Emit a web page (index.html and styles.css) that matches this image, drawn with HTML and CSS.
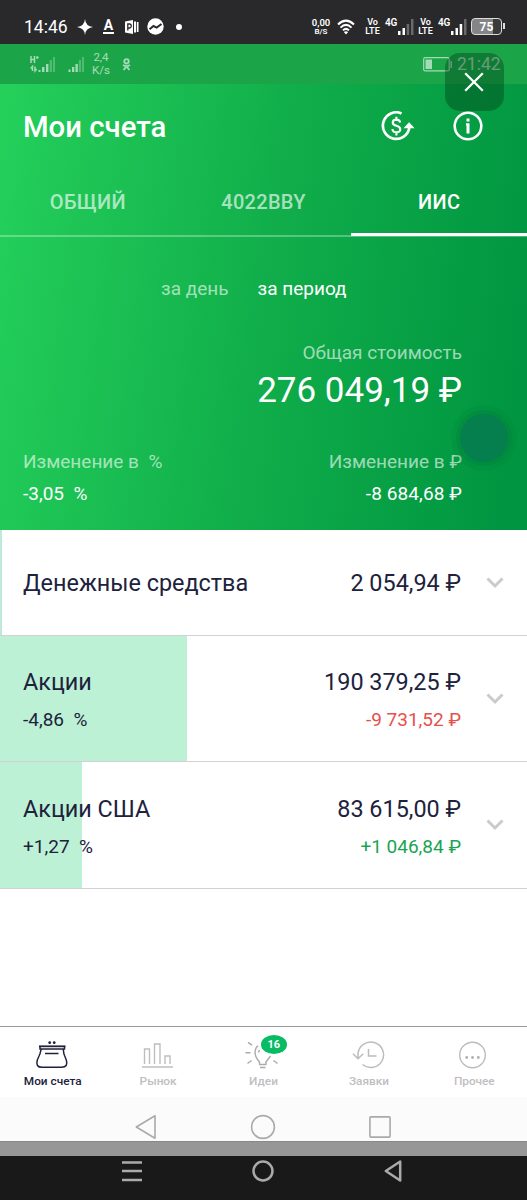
FILE: index.html
```html
<!DOCTYPE html>
<html lang="ru">
<head>
<meta charset="utf-8">
<title>Мои счета</title>
<link rel="stylesheet" href="styles.css">
</head>
<body>
<div class="screen">
  <div class="statusbar">
    <span class="clock">14:46</span>
    <svg class="ic-star" width="16" height="16" viewBox="0 0 16 16"><path fill="#fff" d="M8 0Q8.500 7 16 8Q8.500 9 8 16Q7.500 9 0 8Q7.500 7 8 0Z"/></svg>
    <span class="letter-a">A</span>
    <svg class="ic-doc" width="14" height="14" viewBox="0 0 14 14"><path fill="#fff" d="M0 1.500L8 0V14L0 12.500ZM9 1.500h2v11H9zM11.800 2h1.700v10h-1.700z"/><path fill="none" stroke="#29292b" stroke-width="1.300" d="M2.800 10.500V4h2q1.500.2 1.500 1.900T4.600 8H3"/></svg>
    <svg class="ic-chat" width="17" height="17" viewBox="0 0 17 17"><circle cx="8.500" cy="8.500" r="8.200" fill="#fff"/><path fill="none" stroke="#29292b" stroke-width="2" d="M2.500 11.200L6.500 8l3.200 1.600L14.500 6"/></svg>
    <i class="dot"></i>
    <span class="tiny rate"><b>0,00</b><b class="sm">B/S</b></span>
    <svg class="ic-wifi" width="18" height="16" viewBox="0 0 18 16"><g fill="none" stroke="#fff" stroke-width="2"><path d="M1 5.500Q9-2.200 17 5.500"/><path d="M3.500 8.600Q9 3.200 14.500 8.600"/><path d="M6 11.400Q9 8.400 12 11.400"/></g><path fill="#fff" d="M9 15.500L6.800 13Q9 11.300 11.200 13Z"/></svg>
    <span class="tiny volte"><b>Vo</b><b>LTE</b></span>
    <span class="net">4G</span>
    <svg class="bars" width="17" height="16" viewBox="0 0 17 16"><g fill="#fff"><path d="M1 12h2.500v4H1zM5.500 9H8v7H5.500z"/><path opacity=".3" d="M9.700 5h2.500v11H9.700zM14 0h2.500v16H14z"/></g></svg>
    <span class="tiny volte second"><b>Vo</b><b>LTE</b></span>
    <span class="net">4G</span>
    <svg class="bars" width="17" height="16" viewBox="0 0 17 16"><g fill="#fff"><path d="M1 12h2.500v4H1zM5.500 9H8v7H5.500zM9.700 5h2.500v11H9.700z"/><path opacity=".3" d="M14 0h2.500v16H14z"/></g></svg>
    <span class="battery"><b>75</b></span>
  </div>

  <div class="account">
    <div class="inner-status">
      <svg class="sig-h" width="26" height="17" viewBox="0 0 26 17"><g fill="none" stroke="#fff" stroke-width="1.500"><path d="M1 0v7M4.500 0v7M1 3.500h3.500M6 1.500h2.600M7.300.2v2.600"/><path d="M2.500 15v-4.500L.7 12.500M5 10.500V15l1.700-2"/></g><g fill="#fff"><path d="M8.500 14h2v2h-2zM12 11h2.400v5H12zM16 8h2.400v8H16z"/><path opacity=".4" d="M19.700 4H22v12h-2.300zM23 1h2v15h-2z"/></g></svg>
      <svg class="sig" width="17" height="17" viewBox="0 0 17 17"><g fill="#fff"><path d="M.5 13.500h2V16h-2zM4 11h2.300v5H4zM7.500 8h2.300v8H7.500z"/><path opacity=".4" d="M10.800 4H13v12h-2.200zM14 1h2v15h-2z"/></g></svg>
      <span class="speed">2,4<br>K/s</span>
      <svg class="ok" width="9" height="13" viewBox="0 0 9 13"><g fill="none" stroke="#fff" stroke-width="1.900"><circle cx="4.500" cy="3.300" r="2.200"/><path d="M1 7q3.500 2.200 7 0M1.500 12l3-3.500 3 3.500"/></g></svg>
      <svg class="inner-battery" width="30" height="15" viewBox="0 0 30 15"><rect x=".7" y=".7" width="25.500" height="13.200" rx="1.500" fill="none" stroke="#fff" stroke-width="1.200"/><path fill="#fff" d="M2.500 2.500h6.500v9.500H2.500zM27.500 4h1.400v7h-1.400z"/></svg>
      <span class="inner-clock">21:42</span>
    </div>
    <button class="close" aria-label="Закрыть"><svg width="20" height="20" viewBox="0 0 20 20"><path d="M1.200 1.200l17.600 17.600M18.800 1.200l-17.600 17.600" stroke="#fff" stroke-width="2.300"/></svg></button>

    <div class="titlebar">
      <h1>Мои счета</h1>
      <svg class="ic-money" width="34" height="30" viewBox="0 0 34 30"><g fill="none" stroke="#fff"><path stroke-width="2.700" d="M20.500 2.400A13.300 13.300 0 1 0 28.300 17"/><path stroke-width="2.100" d="M19.200 11.500Q18.800 8.600 15.300 8.600Q11.800 8.700 11.700 11.400Q11.800 14 15.400 14.800Q19.300 15.700 19.300 18.500Q19 21.300 15.500 21.400Q11.600 21.300 11.400 18M15.400 5.800v3M15.400 21.300V24.500"/></g><path fill="#fff" d="M22.500 17.200L28.100 11.300L33.600 17.200Z"/></svg>
      <svg class="ic-info" width="30" height="30" viewBox="0 0 30 30"><circle cx="15" cy="15" r="13.300" fill="none" stroke="#fff" stroke-width="2.600"/><path fill="#fff" d="M13.500 7.600h3v3h-3zM13 12.300h3.500v10.100h-3v-8h-.5z"/></svg>
    </div>
    <div class="tabs"><span>ОБЩИЙ</span><span>4022BBY</span><span class="active">ИИС</span></div>
    <div class="period"><span class="muted">за день</span><span class="sel">за период</span></div>
    <div class="total">
      <div class="total-label muted">Общая стоимость</div>
      <div class="total-value">276 049,19 ₽</div>
    </div>
    <div class="changes muted"><span>Изменение в&nbsp; %</span><span>Изменение в ₽</span></div>
    <div class="changes values"><span>-3,05&nbsp; %</span><span>-8 684,68 ₽</span></div>
    <i class="touch"></i>
  </div>

  <div class="row cash">
    <div class="info"><div class="line main"><span>Денежные средства</span><span class="sum">2 054,94 ₽</span></div></div>
    <svg class="chev" width="18" height="12" viewBox="0 0 18 12"><path d="M1.500 1.500L9 9l7.500-7.500"/></svg>
  </div>
  <div class="row stocks">
    <div class="info">
      <div class="line main"><span>Акции</span><span class="sum">190 379,25 ₽</span></div>
      <div class="line sub"><span>-4,86&nbsp; %</span><span class="loss">-9 731,52 ₽</span></div>
    </div>
    <svg class="chev" width="18" height="12" viewBox="0 0 18 12"><path d="M1.500 1.500L9 9l7.500-7.500"/></svg>
  </div>
  <div class="row usa">
    <div class="info">
      <div class="line main"><span>Акции США</span><span class="sum">83 615,00 ₽</span></div>
      <div class="line sub"><span>+1,27&nbsp; %</span><span class="gain">+1 046,84 ₽</span></div>
    </div>
    <svg class="chev" width="18" height="12" viewBox="0 0 18 12"><path d="M1.500 1.500L9 9l7.500-7.500"/></svg>
  </div>

  <div class="space"></div>

  <div class="nav">
    <div class="item current"><svg width="44" height="36" viewBox="0 0 44 36"><g fill="none" stroke="#20223d" stroke-width="1.500"><path stroke-width="1.800" d="M8 9.300h26.500"/><path d="M9 9.500v2.500h24.500V9.500M10.200 12Q9.500 17 6.300 23Q4.300 30.300 11 30.300H30.500Q37.500 30.300 35.300 23Q32.200 17 32.200 12M14 16.500h13.500"/></g><g fill="#20223d"><circle cx="18.700" cy="5.700" r="1.400"/><circle cx="23.200" cy="5.700" r="1.400"/></g></svg><span>Мои счета</span></div>
    <div class="item"><svg width="44" height="36" viewBox="0 0 44 36"><path fill="none" stroke="#bebebe" stroke-width="1.400" d="M8.500 27V12h5v15M18.500 27V7h5.500v20M29 27v-8h5v8M6 30h31"/></svg><span>Рынок</span></div>
    <div class="item"><svg width="44" height="36" viewBox="0 0 44 36"><path fill="none" stroke="#acacac" stroke-width="1.500" d="M18.500 27.500v-2.500Q14 20 14 15.500Q14 11 17 8.800M25 27.500v-2.500L29.500 19M18 27.500h7.500M19 30.500h5.500M4.500 15.800H9.500M7 5.300l4 2.800M10.500 23.500l-4 3M32.500 23.500l4 3M17.500 15.500L18.500 13"/></svg><span>Идеи</span><b class="badge">16</b></div>
    <div class="item"><svg width="44" height="36" viewBox="0 0 44 36"><path fill="none" stroke="#bcbcbe" stroke-width="1.500" d="M11 21.500V17A12.800 12.800 0 1 1 15.500 27.500M6 16.700L11 21.700L16.200 16.700M21.500 12v7H29.500"/></svg><span>Заявки</span></div>
    <div class="item"><svg width="44" height="36" viewBox="0 0 44 36"><circle cx="20.500" cy="18" r="12.800" fill="none" stroke="#bcbcbe" stroke-width="1.400"/><g fill="#b0b0b2"><circle cx="14.700" cy="20.500" r="1.400"/><circle cx="20.500" cy="20.500" r="1.400"/><circle cx="26.300" cy="20.500" r="1.400"/></g></svg><span>Прочее</span></div>
  </div>
  <div class="keys light">
    <svg width="22" height="26" viewBox="0 0 22 26"><path d="M20 1.700v22.600L1.300 13Z"/></svg>
    <svg width="26" height="26" viewBox="0 0 26 26"><circle cx="13" cy="13" r="11.400"/></svg>
    <svg width="22" height="26" viewBox="0 0 22 26"><rect x=".9" y="2.900" width="20.200" height="20.200" rx=".8"/></svg>
  </div>
  <div class="strip"></div>
  <div class="keys dark">
    <svg width="20" height="24" viewBox="0 0 20 24"><path d="M0 3.500h20M0 12h20M0 21h20"/></svg>
    <svg width="24" height="24" viewBox="0 0 24 24"><circle cx="12" cy="12" r="9.500"/></svg>
    <svg width="18" height="24" viewBox="0 0 18 24"><path d="M16.200 2.500v19L1.800 12Z"/></svg>
  </div>
</div>
</body>
</html>
```
FILE: styles.css
```css
* { box-sizing: border-box; }
body { margin: 0; font-family: Roboto, "Noto Sans", sans-serif; color: #20223d; background: #fff; }
svg { display: block; flex: none; }
.screen { width: 527px; height: 1200px; display: flex; flex-direction: column; overflow: hidden; }

.statusbar { height: 44px; padding: 9px 0 0 24px; background: #29292b; color: #fff; display: flex; align-items: center; }
.clock { width: 53px; font-size: 17.500px; line-height: 34px; }
.letter-a { width: 11px; margin-left: 10px; font-size: 14px; line-height: 13px; font-weight: 700; text-align: center; border-bottom: 2px solid #fff; }
.ic-doc { margin-left: 11px; }
.ic-chat { margin-left: 8px; }
.dot { width: 6px; height: 6px; margin-left: 12px; border-radius: 50%; background: #fff; }
.tiny { display: flex; flex-direction: column; align-items: center; font-size: 9.500px; line-height: 9px; }
.tiny b { font-weight: 600; }
.tiny .sm { font-size: 8px; }
.rate { width: 20px; margin-left: 129px; }
.ic-wifi { margin-left: 6px; }
.volte { width: 15px; margin-left: 10px; font-size: 9px; }
.net { width: 13px; margin: -7px 0 0 5px; font-size: 10px; line-height: 12px; font-weight: 600; letter-spacing: -.3px; }
.bars { margin-left: -1px; }
.second { margin-left: 4px; }
.battery { position: relative; width: 31px; height: 17px; margin-left: 4px; border: 1.500px solid #ddd; border-radius: 4px; background: linear-gradient(90deg, #858585 72%, #3a3a3b 72%); display: flex; align-items: center; justify-content: center; font-size: 12px; }
.battery::after { content: ""; position: absolute; right: -4px; top: 4px; width: 2px; height: 6px; background: #ddd; }

.account { position: relative; height: 486px; color: #fff; background: linear-gradient(98deg, #25d15b 0%, #10ad4a 52%, #009641 95%); }
.inner-status { height: 40px; padding-left: 30px; background: #1ba548; display: flex; align-items: center; }
.inner-status > * { opacity: .6; }
.sig { margin-left: 12px; }
.speed { width: 18px; margin-left: 7px; font-size: 11.500px; line-height: 13px; text-align: center; white-space: nowrap; }
.ok { margin-left: 12px; }
.inner-battery { margin-left: 292px; }
.inner-clock { margin-left: 4px; font-size: 17.500px; }
.close { position: absolute; left: 445px; top: 9px; width: 59px; height: 58px; padding: 0 1px 0 0; border: 0; border-radius: 15px; background: rgba(0, 55, 20, .38); display: flex; align-items: center; justify-content: center; }
.titlebar { height: 86px; padding-left: 23px; display: flex; align-items: center; }
h1 { width: 358px; margin: 0; font-size: 29.300px; line-height: 40px; font-weight: 500; }
.ic-money { margin-top: -3px; }
.ic-info { margin: -3px 0 0 38px; }
.tabs { height: 67px; display: grid; grid-template-columns: repeat(3, 1fr); background: linear-gradient(rgba(255,255,255,.3), rgba(255,255,255,.3)) 0 100% / 100% 2px no-repeat; font-size: 20px; line-height: 65px; font-weight: 500; text-align: center; color: rgba(255,255,255,.65); }
.tabs span { letter-spacing: .3px; }
.tabs .active { color: #fff; border-bottom: 3px solid #fff; height: 66px; }
.period { height: 104px; padding-left: 161px; display: flex; gap: 29px; font-size: 19px; line-height: 103px; }
.muted { color: rgba(255,255,255,.62); }
.total { padding-right: 65px; text-align: right; height: 105px; }
.total-label { font-size: 19px; line-height: 24px; }
.total-value { font-size: 35px; line-height: 52px; }
.changes { height: 32px; padding: 0 65px 0 23px; display: flex; justify-content: space-between; font-size: 19px; line-height: 32px; }
.values > span:last-child { letter-spacing: .1px; }
.touch { position: absolute; left: 460px; top: 370px; width: 48px; height: 48px; border-radius: 50%; background: #057f4d; box-shadow: 0 0 0 4px rgba(0,120,60,.22), 0 0 0 9px rgba(0,120,60,.14); }

.row { display: flex; align-items: center; border-bottom: 1px solid #d2d2d2; background-repeat: no-repeat; }
.info { width: 461px; padding-left: 23px; }
.line { display: flex; justify-content: space-between; white-space: pre; }
.main { font-size: 23.400px; line-height: 38px; }
.sub { font-size: 19px; line-height: 37px; }
.chev { margin-left: 25px; fill: none; stroke: #cbcbcb; stroke-width: 3; }
.cash { height: 106px; background-image: linear-gradient(#bfe9db, #bfe9db); background-size: 2px 100%; }
.stocks { height: 126px; background-image: linear-gradient(#bcf1d6, #bcf1d6); background-size: 187px 100%; }
.usa { height: 127px; background-image: linear-gradient(#bcf1d6, #bcf1d6); background-size: 82px 100%; }
.stocks .info, .usa .info { padding-top: 4px; }
.loss { color: #e5504d; }
.gain { color: #19a454; }
.space { height: 137px; }

.nav { height: 71px; border-top: 1px solid #999; display: grid; grid-template-columns: repeat(5, 1fr); }
.item { position: relative; padding-top: 10px; display: flex; flex-direction: column; align-items: center; font-size: 11.800px; line-height: 16px; font-weight: 500; color: #bebec1; }
.current { color: #20223d; }
.badge { position: absolute; left: 50px; top: 8px; width: 26px; height: 19px; border-radius: 50%; background: #08bb65; color: #fff; text-align: center; font-size: 11px; line-height: 20px; }
.keys { display: flex; align-items: center; fill: none; stroke-linejoin: round; }
.light { height: 44px; padding: 16px 0 0 135px; gap: 93px; background: #fbfbfb; stroke: #aaa; stroke-width: 1.600; }
.strip { height: 15px; background: #979797; border-top: 1px solid #888; }
.dark { height: 44px; padding: 0 0 15px 122px; background: #191919; stroke: #aaa; stroke-width: 2.500; gap: 109px; }
```
